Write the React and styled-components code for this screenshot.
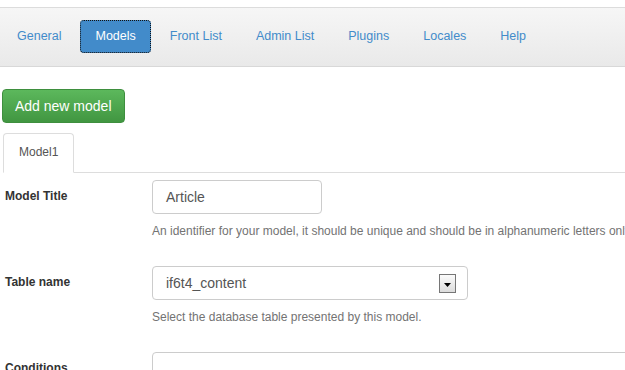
import React from "react";
import styled, { createGlobalStyle } from "styled-components";

const Global = createGlobalStyle`
  html, body { margin: 0; padding: 0; background: #fff; overflow: hidden; }
  body { font-family: "Liberation Sans", Arial, sans-serif; color: #333; }
  * { box-sizing: border-box; }
`;

const Page = styled.div`
  width: 1000px;
  padding-top: 7px;
`;

const Navbar = styled.nav`
  border-top: 1px solid #dcdcdc;
  border-bottom: 1px solid #d8d8d8;
  background: linear-gradient(to bottom, #f6f6f6 0%, #e9e9e9 100%);
  padding: 12px 0 13px 2px;
`;

const NavList = styled.ul`
  list-style: none;
  margin: 0;
  padding: 0;
  display: flex;
  gap: 4px;
`;

const NavLink = styled.a`
  display: block;
  padding: 10px 15px;
  font-size: 12.5px;
  line-height: 13px;
  border-radius: 4px;
  text-decoration: none;
  color: ${(p) => (p.$active ? "#fff" : "#428bca")};
  background: ${(p) => (p.$active ? "#428bca" : "transparent")};
  outline: ${(p) => (p.$active ? "1px dotted #111" : "none")};
  outline-offset: -1px;
`;

const Content = styled.div`
  padding: 22px 0 0 2px;
`;

const GreenButton = styled.button`
  display: block;
  font-family: inherit;
  font-size: 14px;
  line-height: 20px;
  padding: 6px 12px;
  height: 34px;
  color: #fff;
  border: 1px solid #3e8f3e;
  border-radius: 4px;
  background: linear-gradient(to bottom, #5cb85c 0%, #419641 100%);
  cursor: pointer;
`;

const Tabs = styled.ul`
  list-style: none;
  margin: 10px 0 0 1px;
  padding: 0;
  display: flex;
  border-bottom: 1px solid #ddd;
`;

const Tab = styled.li`
  margin-bottom: -1px;
  padding: 10px 15px 11px;
  font-size: 12px;
  line-height: 17px;
  color: #555;
  background: #fff;
  border: 1px solid #ddd;
  border-bottom-color: #fff;
  border-radius: 4px 4px 0 0;
`;

const Form = styled.div`
  padding: 7px 0 0 3px;
`;

const Row = styled.div`
  display: grid;
  grid-template-columns: 147px 1fr;
  margin-bottom: 26px;
`;

const Label = styled.label`
  font-size: 12px;
  font-weight: bold;
  line-height: 17px;
  padding-top: 8px;
  color: #333;
`;

const Control = styled.div`
  display: flex;
  flex-direction: column;
  align-items: flex-start;
`;

const TextInput = styled.div`
  width: ${(p) => p.$w}px;
  height: 34px;
  padding: 0 13px;
  border: 1px solid #ccc;
  border-radius: 4px;
  font-size: 14px;
  line-height: 32px;
  color: #555;
  background: #fff;
  display: flex;
  align-items: center;
  justify-content: space-between;
`;

const Help = styled.p`
  margin: 9px 0 0;
  font-size: 12px;
  line-height: 17px;
  color: #737373;
  white-space: nowrap;
`;

const DropBox = styled.span`
  width: 17px;
  height: 19px;
  margin-right: -2px;
  border: 1px solid #767676;
  background: linear-gradient(to bottom, #fbfbfb 0%, #dcdcdc 100%);
  display: flex;
  align-items: center;
  justify-content: center;
`;

const TextArea = styled.div`
  width: 600px;
  height: 60px;
  border: 1px solid #ccc;
  border-radius: 4px;
`;

const navItems = ["General", "Models", "Front List", "Admin List", "Plugins", "Locales", "Help"];

export default function App() {
  return (
    <Page>
      <Global />
      <Navbar>
        <NavList>
          {navItems.map((n) => (
            <li key={n}>
              <NavLink href="#" $active={n === "Models"}>{n}</NavLink>
            </li>
          ))}
        </NavList>
      </Navbar>
      <Content>
        <GreenButton>Add new model</GreenButton>
        <Tabs>
          <Tab>Model1</Tab>
        </Tabs>
        <Form>
          <Row>
            <Label>Model Title</Label>
            <Control>
              <TextInput $w={170}>Article</TextInput>
              <Help>An identifier for your model, it should be unique and should be in alphanumeric letters only.</Help>
            </Control>
          </Row>
          <Row>
            <Label>Table name</Label>
            <Control>
              <TextInput $w={316}>
                <span>if6t4_content</span>
                <DropBox>
                  <svg width="7" height="4" viewBox="0 0 7 4" style={{ marginTop: 3 }}>
                    <polygon points="0,0 7,0 3.5,4" fill="#000" />
                  </svg>
                </DropBox>
              </TextInput>
              <Help>Select the database table presented by this model.</Help>
            </Control>
          </Row>
          <Row>
            <Label>Conditions</Label>
            <Control>
              <TextArea />
            </Control>
          </Row>
        </Form>
      </Content>
    </Page>
  );
}
